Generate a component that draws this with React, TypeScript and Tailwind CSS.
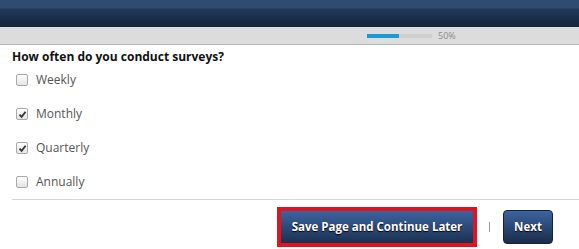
import React from 'react';

const options = [
  { label: 'Weekly', checked: false },
  { label: 'Monthly', checked: true },
  { label: 'Quarterly', checked: true },
  { label: 'Annually', checked: false },
];

const Box: React.FC<{ checked: boolean }> = ({ checked }) => (
  <span className="flex h-[12px] w-[12px] items-center justify-center rounded-[2px] border border-[#a9a9a9] bg-[linear-gradient(#fdfdfd,#e4e4e4)]">
    {checked && (
      <svg width="9" height="9" viewBox="0 0 9 9">
        <path d="M1.5 4.6 L3.6 6.8 L7.6 1.8" fill="none" stroke="#333" strokeWidth="1.8" />
      </svg>
    )}
  </span>
);

const App: React.FC = () => {
  return (
    <div className="h-[249px] w-[579px] overflow-hidden bg-white font-['Open_Sans',sans-serif]">
      <div className="h-[27px] bg-[linear-gradient(#2f4b70_0px,#2f4b70_8px,#213a5c_9px,#16243a_27px)]" />
      <div className="flex h-[18px] items-center border-b border-[#b8b8b8] bg-[#dcdcdc] pl-[367px]">
        <div className="h-[4px] w-[65px] bg-[#cfcfcf]">
          <div className="h-full w-[32px] bg-[#1a9bd7]" />
        </div>
        <span className="ml-[6px] text-[9px] text-[#8a8a8a]">50%</span>
      </div>
      <div className="pl-[12px] pt-[6px] text-[12px] font-bold leading-[12px] text-[#111]">How often do you conduct surveys?</div>
      <div>
        {options.map((o) => (
          <div key={o.label} className="flex h-[34px] items-center pl-[16px]">
            <Box checked={o.checked} />
            <span className="ml-[8px] text-[12px] text-[#555]">{o.label}</span>
          </div>
        ))}
      </div>
      <div className="ml-[12px] border-t border-[#d6d6d6]" />
      <div className="mt-[7px] flex items-center">
        <div className="ml-[277px] border-[4px] border-[#e0141e]">
          <button className="flex h-[32px] w-[192px] items-center justify-center bg-[linear-gradient(#3c64a0,#1c3050)] text-[11.5px] font-bold text-white [text-shadow:0_1px_1px_#000]">
            Save Page and Continue Later
          </button>
        </div>
        <div className="ml-[12px] h-[10px] w-px bg-[#999]" />
        <button className="ml-[13px] flex h-[34px] w-[50px] items-center justify-center rounded-[4px] border border-[#13223a] bg-[linear-gradient(#3c64a0,#1a2c4a)] text-[11.5px] font-bold text-white [text-shadow:0_1px_1px_#000]">
          Next
        </button>
      </div>
    </div>
  );
};

export default App;
